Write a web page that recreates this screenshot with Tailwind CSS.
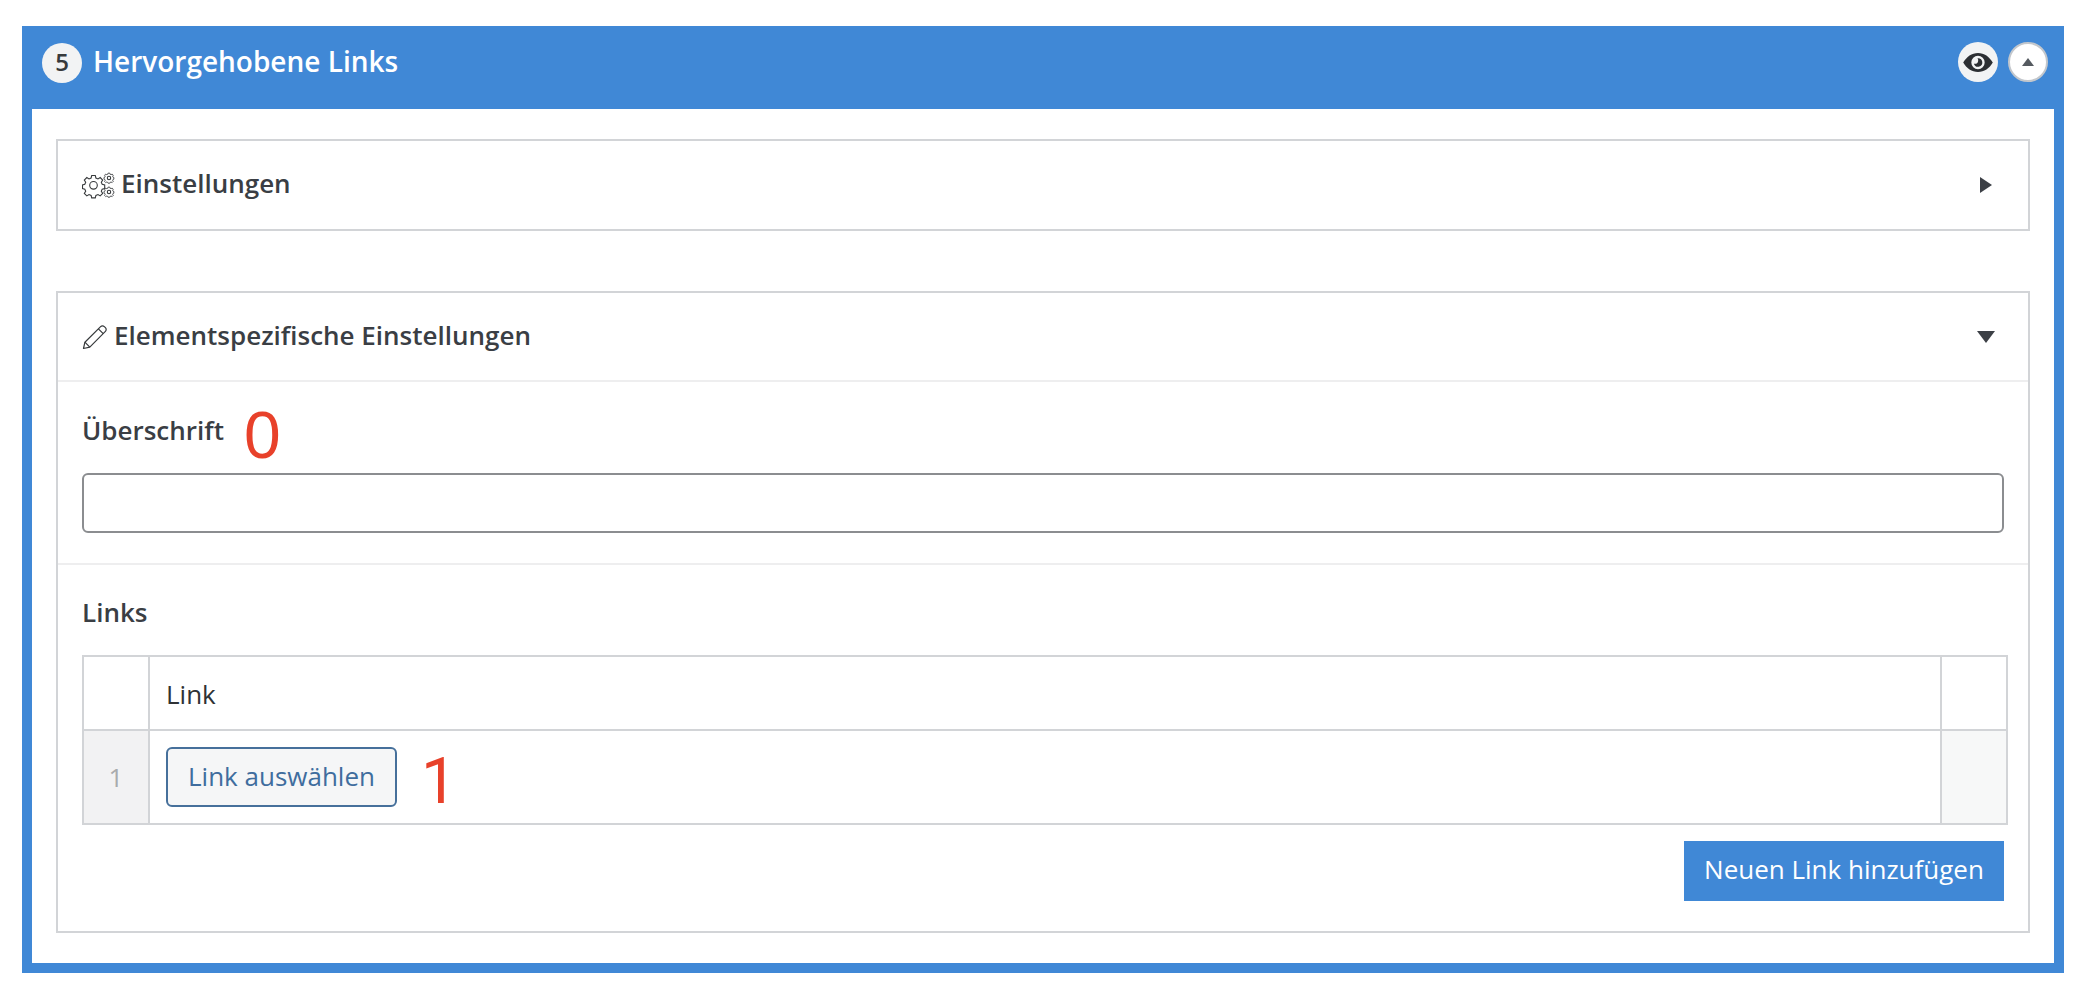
<!doctype html>
<html lang="de">
<head>
<meta charset="utf-8">
<title>Hervorgehobene Links</title>
<script src="https://cdn.jsdelivr.net/npm/@tailwindcss/browser@4"></script>
</head>
<body class="bg-white font-['Open_Sans',sans-serif] text-[#3a3e44] overflow-hidden">
<div class="pt-[26px] pl-[22px] w-[2064px] h-[998px]">
  <section class="w-[2042px] h-[947px] bg-[#4088d6] flex flex-col">
    <header class="h-[83px] shrink-0 flex items-center pl-[20px] pr-[16px] pb-[9px]">
      <span class="w-10 h-10 rounded-full bg-[#f2f3f4] flex items-center justify-center text-[24px] font-semibold text-[#373a3c] leading-none pb-[2px]">5</span>
      <h1 class="ml-[11px] text-[28px] font-semibold text-white leading-none pb-[4px]">Hervorgehobene Links</h1>
      <div class="ml-auto mb-[2px] flex items-center gap-[10px]">
        <span class="w-10 h-10 rounded-full bg-[#f2f3f4] flex items-center justify-center">
          <svg width="32" height="21" viewBox="0 0 32 22"><path fill="#2c2f33" fill-rule="evenodd" d="M16 1C9.5 1 4 5 .5 11 4 17 9.5 21 16 21s12-4 15.5-10C28 5 22.500 1 16 1Zm0 3a7 7 0 1 1 0 14 7 7 0 0 1 0-14Z"/><path fill="#2c2f33" d="M16 6.500a4.500 4.500 0 1 1-4.300 5.800c1.800.5 3.700-.4 4.300-2.200.4-1.200.2-2.500-.6-3.500.2-.1.400-.1.600-.1Z"/></svg>
        </span>
        <span class="w-10 h-10 rounded-full bg-white border-2 border-[#c3c7cc] flex items-center justify-center">
          <svg width="12" height="8" viewBox="0 0 12 8"><path fill="#555a60" d="M6 0l6 8H0z"/></svg>
        </span>
      </div>
    </header>
    <div class="flex-1 mx-[10px] mb-[10px] bg-white px-[24px] pt-[30px]">
      <div class="h-[92px] border-2 border-[#d2d4d7] flex items-center pl-[24px] pr-[36px]">
        <svg width="34" height="28" viewBox="0 0 34 28" fill="none" stroke="#373a3c" stroke-width="1.100" class="shrink-0 mr-[5px]">
          <path d="M9.700 4.500h3.600l.6 2.500 2.100.9 2.200-1.400 2.500 2.500-1.400 2.200.9 2.100 2.500.6v3.600l-2.500.6-.9 2.100 1.400 2.200-2.500 2.500-2.200-1.400-2.100.9-.6 2.500H9.700l-.6-2.500-2.100-.9-2.200 1.400-2.500-2.500 1.400-2.200-.9-2.100-2.300-.6v-3.600l2.300-.6.9-2.100-1.400-2.200 2.500-2.500 2.200 1.400 2.100-.9z"/>
          <circle cx="11.500" cy="14.300" r="3.800"/>
          <path d="M25.800 1h2.400l.4 1.500 1.200.5 1.400-.8 1.500 1.500-.8 1.400.5 1.200 1.100.4v2.200l-1.100.4-.5 1.200.8 1.400-1.500 1.500-1.400-.8-1.200.5-.4 1.100h-2.400l-.4-1.100-1.200-.5-1.400.8-1.500-1.500.8-1.400-.5-1.200-1.100-.4V6.700l1.100-.4.500-1.200-.8-1.400 1.500-1.500 1.400.8 1.200-.5z" transform="translate(6.400 1.400) scale(.76)"/>
          <circle cx="27" cy="7" r="1.700"/>
          <path d="M25.800 1h2.400l.4 1.500 1.200.5 1.400-.8 1.500 1.500-.8 1.400.5 1.200 1.100.4v2.200l-1.100.4-.5 1.200.8 1.400-1.500 1.500-1.400-.8-1.200.5-.4 1.100h-2.400l-.4-1.100-1.200-.5-1.400.8-1.500-1.500.8-1.400-.5-1.200-1.100-.4V6.700l1.100-.4.500-1.200-.8-1.400 1.500-1.500 1.400.8 1.200-.5z" transform="translate(6.400 15.400) scale(.76)"/>
          <circle cx="27" cy="21" r="1.700"/>
        </svg>
        <h2 class="text-[26px] font-semibold leading-none pb-[5px]">Einstellungen</h2>
        <svg width="12" height="16" viewBox="0 0 12 16" class="ml-auto"><path fill="#3c4046" d="M0 0l12 8-12 8z"/></svg>
      </div>
      <div class="mt-[60px] h-[642px] border-2 border-[#d2d4d7] flex flex-col">
        <div class="h-[89px] shrink-0 border-b-2 border-[#eeeeef] flex items-center pl-[24px] pr-[33px]">
          <svg width="26" height="26" viewBox="0 0 26 26" fill="none" stroke="#373a3c" stroke-width="1.200" stroke-linejoin="round" class="shrink-0 mr-[6px]">
            <path d="M1.500 24.500l1.400-6.300L18.600 2.600a2.600 2.600 0 0 1 3.700 0l1.100 1.100a2.600 2.600 0 0 1 0 3.700L7.800 23.100z"/><path d="M16.400 4.800l4.800 4.800M2.900 18.200l4.900 4.900"/>
          </svg>
          <h2 class="text-[26px] font-semibold leading-none pb-[4px]">Elementspezifische Einstellungen</h2>
          <svg width="18" height="12" viewBox="0 0 18 12" class="ml-auto"><path fill="#3c4046" d="M0 0h18l-9 12z"/></svg>
        </div>
        <div class="h-[183px] shrink-0 border-b-2 border-[#eeeeef] px-[24px]">
          <div class="h-[91px] flex items-start">
            <label class="mt-[31px] text-[26px] font-semibold leading-[34px]">Überschrift</label>
            <span class="ml-[20px] mt-[17px] text-[66px] leading-[72px] text-[#e8412a] font-['Liberation_Sans',sans-serif]">0</span>
          </div>
          <input type="text" aria-label="Überschrift" class="block w-[1922px] h-[60px] rounded-[6px] border-2 border-[#8b8d90] bg-white">
        </div>
        <div class="flex-1 px-[24px] relative">
          <h3 class="mt-[32px] text-[26px] font-semibold leading-[30px]">Links</h3>
          <table class="mt-[28px] w-[1926px] border-collapse table-fixed border-2 border-[#d2d4d7]">
            <colgroup><col class="w-[66px]"><col><col class="w-[66px]"></colgroup>
            <tbody>
              <tr class="h-[74px]">
                <td class="border-2 border-[#d2d4d7]"></td>
                <td class="border-2 border-[#d2d4d7] pl-[16px] pt-[2px] text-[26px] leading-[34px] text-[#2f3235]">Link</td>
                <td class="border-2 border-[#d2d4d7]"></td>
              </tr>
              <tr class="h-[94px]">
                <td class="border-2 border-[#d2d4d7] bg-[#f2f2f3] text-center text-[26px] leading-[34px] text-[#a9abad]">1</td>
                <td class="border-2 border-[#d2d4d7] pl-[16px]">
                  <div class="flex items-center">
                    <button class="w-[231px] h-[60px] rounded-[6px] border-2 border-[#46709b] bg-[#f5f6f7] text-[26px] leading-none text-[#3f6d9e] pb-[2px]">Link auswählen</button>
                    <span class="ml-[24px] mt-[10px] text-[64px] leading-[60px] text-[#e8412a] font-['Roboto',sans-serif]">1</span>
                  </div>
                </td>
                <td class="border-2 border-[#d2d4d7] border-l-[#e6e7e8] bg-[#f7f8f8]"></td>
              </tr>
            </tbody>
          </table>
          <div class="mt-[16px] flex justify-end w-[1922px]">
            <button class="w-[320px] h-[60px] bg-[#4088d6] text-white text-[26px] leading-none pb-[4px]">Neuen Link hinzufügen</button>
          </div>
        </div>
      </div>
    </div>
  </section>
</div>
</body>
</html>
